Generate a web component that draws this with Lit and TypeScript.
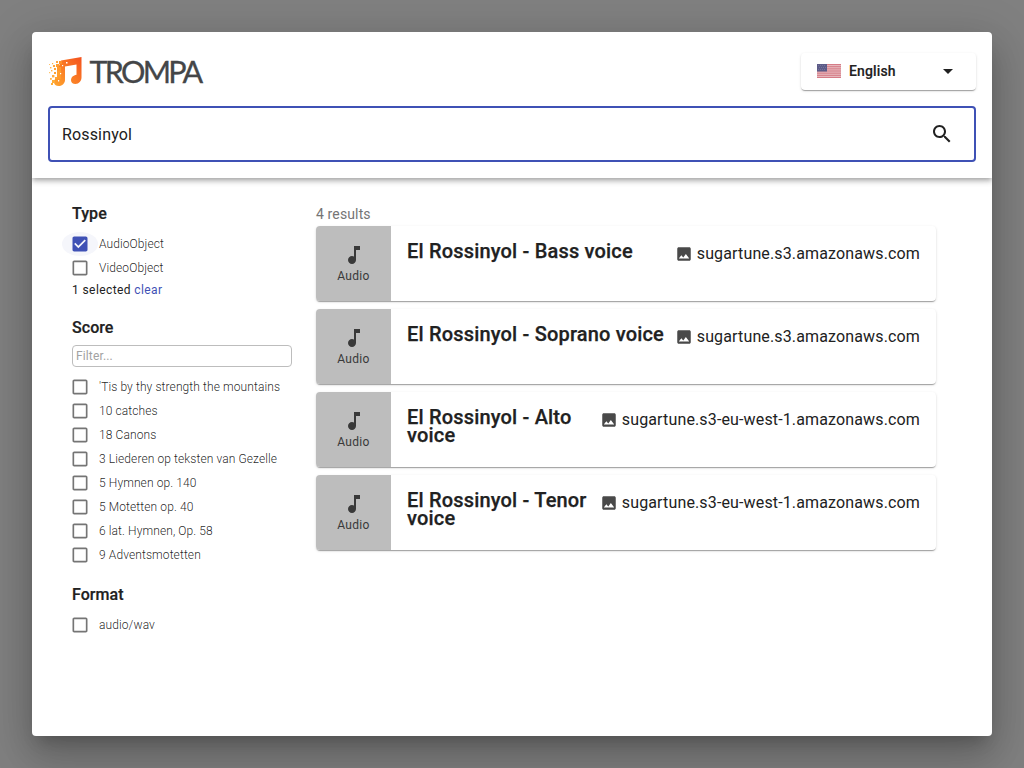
import { LitElement, html, css, svg } from "lit";
import { customElement, property } from "lit/decorators.js";

const scores = [
  "'Tis by thy strength the mountains",
  "10 catches",
  "18 Canons",
  "3 Liederen op teksten van Gezelle",
  "5 Hymnen op. 140",
  "5 Motetten op. 40",
  "6 lat. Hymnen, Op. 58",
  "9 Adventsmotetten",
];

const results = [
  { title: "El Rossinyol - Bass voice", host: "sugartune.s3.amazonaws.com" },
  { title: "El Rossinyol - Soprano voice", host: "sugartune.s3.amazonaws.com" },
  { title: "El Rossinyol - Alto voice", host: "sugartune.s3-eu-west-1.amazonaws.com" },
  { title: "El Rossinyol - Tenor voice", host: "sugartune.s3-eu-west-1.amazonaws.com" },
];

// Orange fragments scattering off the left side of the logo's note: x, y, size, colour.
const bits: [number, number, number, string][] = [
  [10, 5, 3, "#ff8f2b"], [7, 5, 2, "#ffa640"], [3, 7, 1.2, "#ffb347"],
  [4, 9, 2, "#ffa63a"], [1, 11, 1.4, "#ffb14a"], [7, 8, 3, "#ff9d30"], [8, 11, 4, "#ff982e"],
  [5, 12, 2, "#ffa538"], [2, 14, 1.4, "#ffb347"], [0, 16, 1.2, "#ffc46b"], [8, 15, 4, "#ffa030"],
  [5, 16, 2, "#ffa230"], [8, 19, 4, "#ff9c2c"], [3, 19, 2.4, "#ffab3d"],
  [6, 21, 2, "#ffa733"], [1, 22, 1.8, "#ffb548"], [3, 24, 3, "#ffad38"], [2, 27, 2, "#ffae38"],
  [0, 8, 1, "#ffc06a"],
];

@customElement("check-row")
export class CheckRow extends LitElement {
  @property() label = "";
  @property({ type: Boolean }) checked = false;

  static styles = css`
    :host { display: flex; align-items: center; height: 24px; }
    .box { display: flex; align-items: center; justify-content: center; width: 36px; height: 24px; margin-left: -10px; border-radius: 50%; flex: none; }
    .on { background: #f5f6fb; }
    svg { width: 20px; height: 20px; fill: #757575; }
    .on svg { fill: #3f51b5; }
    .label { font-size: 12px; font-weight: 300; letter-spacing: 0.1px; color: rgba(0, 0, 0, 0.87); margin-left: 1px; white-space: nowrap; }
  `;

  render() {
    return html`<span class="box ${this.checked ? "on" : ""}">
        <svg viewBox="0 0 24 24">${this.checked
          ? svg`<path d="M19 3H5c-1.11 0-2 .9-2 2v14c0 1.1.89 2 2 2h14c1.11 0 2-.9 2-2V5c0-1.1-.89-2-2-2zm-9 14l-5-5 1.41-1.41L10 14.17l7.59-7.59L19 8l-9 9z"/>`
          : svg`<path d="M19 5v14H5V5h14m0-2H5c-1.1 0-2 .9-2 2v14c0 1.1.9 2 2 2h14c1.1 0 2-.9 2-2V5c0-1.1-.9-2-2-2z"/>`}</svg>
      </span><span class="label">${this.label}</span>`;
  }
}

@customElement("result-card")
export class ResultCard extends LitElement {
  @property() heading = "";
  @property() host = "";

  static styles = css`
    :host { display: flex; height: 75px; border-radius: 4px; overflow: hidden; background: #fff;
      box-shadow: 0 2px 1px -1px rgba(0,0,0,.2), 0 1px 1px 0 rgba(0,0,0,.14), 0 1px 3px 0 rgba(0,0,0,.12); }
    .thumb { width: 75px; flex: none; background: #bdbdbd; display: flex; flex-direction: column; align-items: center; box-sizing: border-box; padding-top: 17px; color: #393939; }
    .thumb svg { width: 24px; height: 24px; fill: #393939; }
    .kind { font-size: 12px; line-height: 16px; letter-spacing: 0.3px; margin-top: 1px; }
    .body { flex: 1; display: flex; justify-content: space-between; padding: 15px 16px 0; min-width: 0; }
    .title { font-size: 20px; font-weight: 500; line-height: 18px; letter-spacing: 0.18px; margin: 1px 0 0; color: #212121; -webkit-text-stroke: 0.25px #212121; }
    .source { display: flex; height: 24px; align-items: center; flex: none; font-size: 16px; letter-spacing: 0.14px; color: #212121; margin-left: 8px; }
    .source svg { width: 18px; height: 18px; fill: #494949; margin: 1px 4px 0 0; }
  `;

  render() {
    return html`<div class="thumb">
        <svg viewBox="0 0 24 24"><path d="M12 3v10.55c-.59-.34-1.27-.55-2-.55-2.21 0-4 1.79-4 4s1.79 4 4 4 4-1.79 4-4V7h4V3h-6z"/></svg>
        <span class="kind">Audio</span>
      </div>
      <div class="body">
        <h6 class="title">${this.heading}</h6>
        <span class="source">
          <svg viewBox="0 0 24 24"><path d="M21 19V5c0-1.1-.9-2-2-2H5c-1.1 0-2 .9-2 2v14c0 1.1.9 2 2 2h14c1.1 0 2-.9 2-2zM5 18l3.5-4.5 2.5 3.01L14.5 12l4.5 6H5z"/></svg>${this.host}
        </span>
      </div>`;
  }
}

@customElement("app-root")
export class AppRoot extends LitElement {
  static styles = css`
    :host { display: block; width: 100vw; height: 100vh; box-sizing: border-box; padding: 32px; background: #808080; font-family: Roboto, sans-serif; color: #212121; overflow: hidden; }
    .dialog { height: 704px; background: #fff; border-radius: 4px;
      box-shadow: 0 11px 15px -7px rgba(0,0,0,.2), 0 24px 38px 3px rgba(0,0,0,.14), 0 9px 46px 8px rgba(0,0,0,.12); }
    .header { height: 146px; box-sizing: border-box; padding: 20px 16px 16px; border-radius: 4px 4px 0 0;
      box-shadow: 0 2px 4px -1px rgba(0,0,0,.2), 0 4px 5px 0 rgba(0,0,0,.14), 0 1px 10px 0 rgba(0,0,0,.12); clip-path: inset(0 0 -20px 0); }
    .bar { display: flex; justify-content: space-between; height: 54px; }
    .logo { width: 170px; height: 40px; overflow: visible; }
    .brand { font-family: Lato, sans-serif; font-size: 30.5px; letter-spacing: -2.7px; fill: #444648; stroke: #444648; stroke-width: 0.3px; }
    .lang { display: flex; align-items: center; width: 175px; height: 37px; box-sizing: border-box; padding: 0 16px 1px; border-radius: 4px; margin-top: 1px;
      box-shadow: 0 2px 1px -1px rgba(0,0,0,.2), 0 1px 1px 0 rgba(0,0,0,.14), 0 1px 3px 0 rgba(0,0,0,.12); }
    .flag { width: 24px; height: 14px; margin-top: -1px; }
    .name { font-size: 14px; font-weight: 500; letter-spacing: 0.13px; margin-left: 8px; flex: 1; -webkit-text-stroke: 0.15px #212121; }
    .arrow { width: 24px; height: 24px; fill: #212121; }
    .search { height: 56px; box-sizing: border-box; border: 2px solid #3f51b5; border-radius: 4px; display: flex; align-items: center; justify-content: space-between; padding: 0 20px 0 12px; font-size: 16px; letter-spacing: 0.15px; }
    .search svg { width: 24px; height: 24px; fill: #212121; }
    .content { display: flex; padding: 26px 56px 0 40px; }
    .facets { width: 220px; margin-right: 24px; flex: none; }
    .facet { font-size: 16px; line-height: 20px; font-weight: 500; letter-spacing: 0.05px; margin: 0 0 8px; -webkit-text-stroke: 0.2px #212121; }
    .selected { font-size: 12px; line-height: 20px; letter-spacing: 0.4px; margin-bottom: 18px; }
    .clear { color: #3f51b5; }
    .filter { height: 22px; box-sizing: border-box; border: 1px solid #bdbdbd; border-radius: 4px; padding: 0 3px; font-size: 12px; line-height: 20px; font-weight: 400; color: #a2a2a2; margin: -1px 0 8px; letter-spacing: 0.13px; }
    .format { margin-top: 18px; }
    .results { flex: 1; display: flex; flex-direction: column; gap: 8px; }
    .count { font-size: 14px; line-height: 20px; letter-spacing: 0.13px; color: #757575; margin: 0 0 -6px; }
  `;

  render() {
    return html`<div class="dialog">
      <header class="header">
        <div class="bar">
          <svg class="logo" viewBox="0 0 170 40">
            <defs><linearGradient id="note" x1="0" y1="1" x2="1" y2="0"><stop offset="0" stop-color="#ffa52d"/><stop offset="1" stop-color="#f4511e"/></linearGradient></defs>
            <path fill="url(#note)" d="M13 8.500L33.500 5v20.500c0 3.500-2.600 6.500-6 6.500-2.800 0-4.500-1.600-4.500-3.700 0-3 2.300-5 5.500-5.500V12.600l-11.500 2V28c0 3.300-2.800 6-6.200 6-2.900 0-4.800-1.500-4.800-3.800 0-3 2-5 5-5.200V14z"/>
            <g transform="translate(1 4)">${bits.map(([x, y, s, c]) => svg`<rect x=${x} y=${y} width=${s} height=${s} fill=${c}/>`)}</g>
            <g fill="#fff"><rect x="18" y="10" width="1.500" height="1.500"/><rect x="14" y="13" width="1.200" height="1.200"/><rect x="12" y="21" width="1.200" height="1.200"/><rect x="10" y="28" width="1.200" height="1.500"/></g>
            <text class="brand" x="41.500" y="30.500">TROMPA</text>
          </svg>
          <div class="lang">
            <svg class="flag" viewBox="0 0 24 14" preserveAspectRatio="none">
              <rect width="24" height="14" fill="#e8bcc1"/>
              ${[0, 1, 2, 3, 4, 5, 6].map((i) => svg`<rect y=${i * 2.154} width="24" height="1.077" fill="#d57c87"/>`)}
              <rect width="10" height="7.500" fill="#5c5b88"/>
              <g fill="#8e8eae">${[1, 3, 5, 7].flatMap((x) => [1, 3, 5].map((y) => svg`<rect x=${x + (y === 3 ? 1 : 0)} y=${y} width="0.700" height="0.700"/>`))}</g>
            </svg>
            <span class="name">English</span>
            <svg class="arrow" viewBox="0 0 24 24"><path d="M7 10l5 5 5-5z"/></svg>
          </div>
        </div>
        <div class="search"><span>Rossinyol</span>
          <svg viewBox="0 0 24 24"><path d="M15.5 14h-.79l-.28-.27C15.410 12.590 16 11.110 16 9.500 16 5.910 13.090 3 9.500 3S3 5.910 3 9.500 5.910 16 9.500 16c1.610 0 3.090-.59 4.230-1.570l.27.28v.79l5 4.990L20.490 19l-4.990-5zm-6 0C7.010 14 5 11.990 5 9.500S7.010 5 9.500 5 14 7.010 14 9.500 11.990 14 9.500 14z"/></svg>
        </div>
      </header>
      <main class="content">
        <aside class="facets">
          <h3 class="facet">Type</h3>
          <check-row label="AudioObject" checked></check-row>
          <check-row label="VideoObject"></check-row>
          <div class="selected">1 selected <span class="clear">clear</span></div>
          <h3 class="facet">Score</h3>
          <div class="filter">Filter...</div>
          ${scores.map((s) => html`<check-row label=${s}></check-row>`)}
          <h3 class="facet format">Format</h3>
          <check-row label="audio/wav"></check-row>
        </aside>
        <section class="results">
          <p class="count">4 results</p>
          ${results.map((r) => html`<result-card heading=${r.title} host=${r.host}></result-card>`)}
        </section>
      </main>
    </div>`;
  }
}
